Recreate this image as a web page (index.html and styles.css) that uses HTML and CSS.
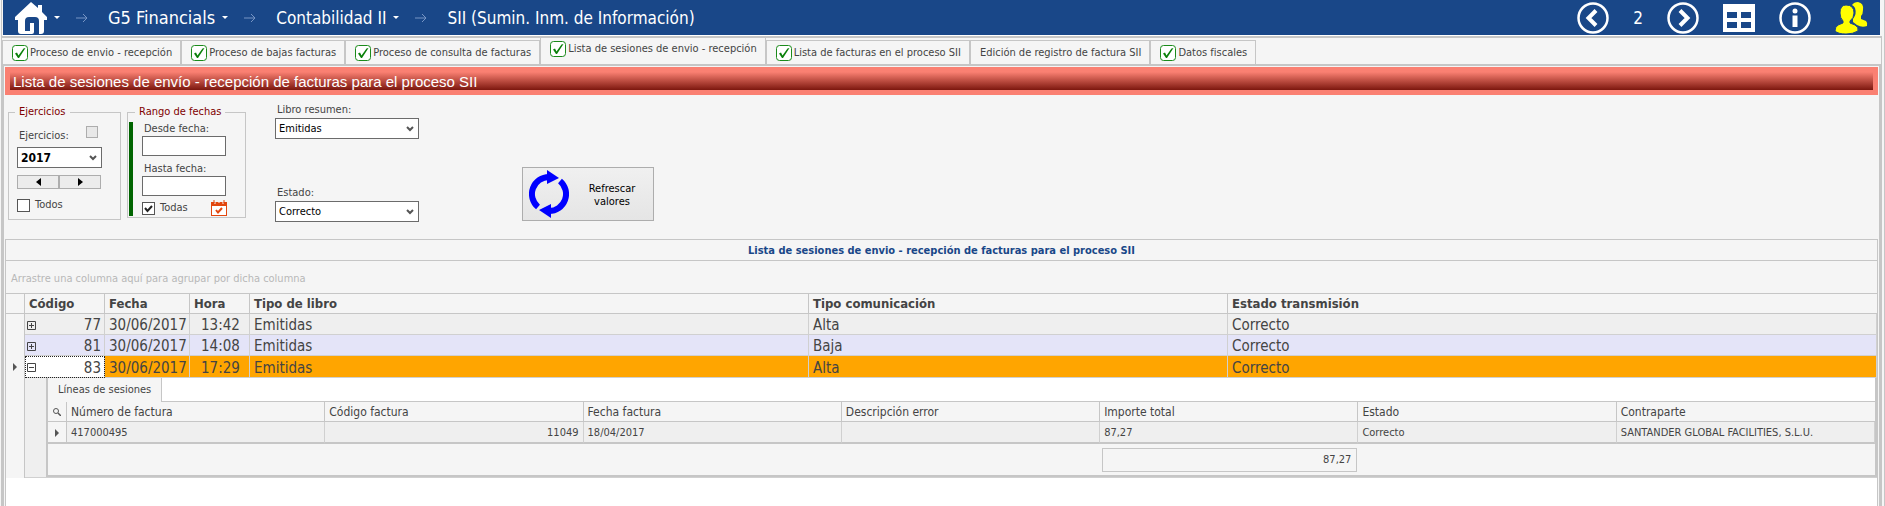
FILE: index.html
```html
<!DOCTYPE html>
<html lang="es">
<head>
  <meta charset="UTF-8">
  <meta name="viewport" content="width=device-width, initial-scale=1.0">
  <title>SII (Sumin. Inm. de Información)</title>
  <link rel="stylesheet" href="styles.css">
</head>
<body>
  <svg class="defs" width="0" height="0" aria-hidden="true">
    <symbol id="arrow" viewBox="0 0 12 10"><path d="M0 5H11M7 1L11 5L7 9" fill="none" stroke="#7795c4"/></symbol>
    <symbol id="check" viewBox="0 0 16 16"><rect x=".5" y=".5" width="15" height="15" rx="3" fill="#fff" stroke="#1a8a1a"/><path d="M3 8.5L5 7.5L6.5 10.5L11.5 3.5L13.5 3L7 13H6Z" fill="#0a800a"/></symbol>
    <symbol id="plus" viewBox="0 0 9 9"><path d="M.5 .5H8.5V8.5H.5ZM2 4.5H7M4.5 2V7" fill="none" stroke="#444"/></symbol>
    <symbol id="minus" viewBox="0 0 9 9"><path d="M.5 .5H8.5V8.5H.5ZM2 4.5H7" fill="none" stroke="#444"/></symbol>
    <symbol id="mark" viewBox="0 0 4 8"><path d="M0 0L4 4L0 8Z" fill="#555"/></symbol>
  </svg>

  <div class="window">
    <header class="topbar">
      <nav class="crumbs">
        <a class="home" href="#" aria-label="Inicio">
          <svg width="32" height="32" viewBox="0 0 32 32"><path d="M16 0L23 6V3H27V10L32 15V18H29V29Q29 32 26 32H24V19Q24 15 20 15H14Q10 15 10 19V29H15V21H19V30Q19 32 17 32H6Q3 32 3 29V18H0V15Z" fill="#fff"/></svg>
        </a>
        <span class="caret"></span>
        <svg class="arrow" width="12" height="10"><use href="#arrow"/></svg>
        <a class="app" href="#">G5 Financials</a>
        <span class="caret"></span>
        <svg class="arrow" width="12" height="10"><use href="#arrow"/></svg>
        <a href="#">Contabilidad II</a>
        <span class="caret"></span>
        <svg class="arrow" width="12" height="10"><use href="#arrow"/></svg>
        <a href="#">SII (Sumin. Inm. de Información)</a>
      </nav>
      <div class="tools">
        <button type="button" aria-label="Anterior"><svg width="32" height="32" viewBox="0 0 32 32" fill="none" stroke="#fff"><circle cx="16" cy="16" r="14.5" stroke-width="2.5"/><path d="M19 8.5L11.5 16L19 23.5" stroke-width="4"/></svg></button>
        <span class="page-number">2</span>
        <button type="button" aria-label="Siguiente"><svg width="32" height="32" viewBox="0 0 32 32" fill="none" stroke="#fff"><circle cx="16" cy="16" r="14.5" stroke-width="2.5"/><path d="M13 8.5L20.5 16L13 23.5" stroke-width="4"/></svg></button>
        <button type="button" aria-label="Ventanas"><svg width="32" height="28" viewBox="0 0 32 28"><path fill="#fff" fill-rule="evenodd" d="M0 0H32V28H0ZM4 8V14H14V8ZM18 8V14H28V8ZM4 18V24H14V18ZM18 18V24H28V18Z"/></svg></button>
        <button type="button" aria-label="Información"><svg width="32" height="32" viewBox="0 0 32 32"><circle cx="16" cy="16" r="14.5" fill="none" stroke="#fff" stroke-width="2.5"/><circle cx="16" cy="9" r="2.5" fill="#fff"/><path d="M13.5 13.5H18.5V25H13.5Z" fill="#fff"/></svg></button>
        <button type="button" aria-label="Usuarios"><svg width="33" height="32" viewBox="0 0 33 32" fill="#ff0"><path d="M17 3Q19 0 23 0Q29 1 28 8Q28 12 26 14V17L31 19Q33 21 32 24Q27 26 22 23L18 20V17Q22 12 20 6Q19 4 17 3Z"/><path d="M11 3Q19 3 19 11Q19 16 15 19V21L20 23Q24 25 23 29Q18 32 11 32Q3 32 0 29Q0 25 3 23L8 21V19Q5 16 5 11Q5 3 11 3Z" stroke="#194788"/></svg></button>
      </div>
    </header>

    <nav class="tabs">
      <a class="tab" href="#"><svg width="16" height="16"><use href="#check"/></svg>Proceso de envio - recepción</a>
      <a class="tab" href="#"><svg width="16" height="16"><use href="#check"/></svg>Proceso de bajas facturas</a>
      <a class="tab" href="#"><svg width="16" height="16"><use href="#check"/></svg>Proceso de consulta de facturas</a>
      <a class="tab active" href="#"><svg width="16" height="16"><use href="#check"/></svg>Lista de sesiones de envio - recepción</a>
      <a class="tab" href="#"><svg width="16" height="16"><use href="#check"/></svg>Lista de facturas en el proceso SII</a>
      <a class="tab" href="#">Edición de registro de factura SII</a>
      <a class="tab" href="#"><svg width="16" height="16"><use href="#check"/></svg>Datos fiscales</a>
    </nav>

    <main class="page">
      <h1 class="banner"><span>Lista de sesiones de envío - recepción de facturas para el proceso SII</span></h1>

      <form class="filters">
        <fieldset class="group years">
          <legend>Ejercicios</legend>
          <div class="line">
            <label for="ejercicio">Ejercicios:</label>
            <button class="mini" type="button" aria-label="Opciones"></button>
          </div>
          <select id="ejercicio" class="year"><option>2017</option></select>
          <div class="spin">
            <button type="button" aria-label="Anterior"><svg width="5" height="8" viewBox="0 0 5 8"><path d="M5 0V8L0 4Z"/></svg></button>
            <button type="button" aria-label="Siguiente"><svg width="5" height="8" viewBox="0 0 5 8"><path d="M0 0V8L5 4Z"/></svg></button>
          </div>
          <label class="tick"><input type="checkbox">Todos</label>
        </fieldset>

        <fieldset class="group dates">
          <legend>Rango de fechas</legend>
          <div class="stripe"></div>
          <div class="date-fields">
            <label for="desde">Desde fecha:</label>
            <input id="desde" class="date" type="text">
            <label class="second" for="hasta">Hasta fecha:</label>
            <input id="hasta" class="date" type="text">
            <div class="line">
              <label class="tick"><input type="checkbox" checked>Todas</label>
              <svg width="16" height="16" viewBox="0 0 16 16"><path d="M0 2H16V16H0Z" fill="#e2470f"/><path d="M1 6H15V15H1Z" fill="#fff"/><path d="M4 0V4M12 0V4M8 0V3" stroke="#f6f6f6"/><path d="M3 0V3M13 0V3" stroke="#e2470f"/><path d="M5 10L7 12.5L11 8" fill="none" stroke="#e2470f" stroke-width="2"/></svg>
            </div>
          </div>
        </fieldset>

        <div class="combos">
          <div class="combo">
            <label for="libro">Libro resumen:</label>
            <select id="libro"><option>Emitidas</option></select>
          </div>
          <div class="combo">
            <label for="estado">Estado:</label>
            <select id="estado"><option>Correcto</option></select>
          </div>
        </div>

        <button class="refresh" type="button">
          <svg width="40" height="48" viewBox="0 0 40 48"><g fill="none" stroke="#00f" stroke-width="6"><path d="M9 37A17 17 0 0 1 20 7"/><path d="M31 11A17 17 0 0 1 20 41"/></g><path d="M18 0L30 8L18 14ZM22 48L10 40L22 34Z" fill="#00f"/></svg>
          <span>Refrescar valores</span>
        </button>
      </form>

      <section class="grid">
        <h2>Lista de sesiones de envio - recepción de facturas para el proceso SII</h2>
        <p class="group-panel">Arrastre una columna aquí para agrupar por dicha columna</p>

        <table class="sessions">
          <colgroup>
            <col class="c-mark"><col class="c-code"><col class="c-date"><col class="c-time"><col class="c-book"><col class="c-com"><col>
          </colgroup>
          <thead>
            <tr><th></th><th>Código</th><th>Fecha</th><th>Hora</th><th>Tipo de libro</th><th>Tipo comunicación</th><th>Estado transmisión</th></tr>
          </thead>
          <tbody>
            <tr>
              <td class="mark"></td>
              <td class="code"><div><svg width="9" height="9"><use href="#plus"/></svg>77</div></td>
              <td>30/06/2017</td><td class="time">13:42</td><td>Emitidas</td><td>Alta</td><td>Correcto</td>
            </tr>
            <tr class="alt">
              <td class="mark"></td>
              <td class="code"><div><svg width="9" height="9"><use href="#plus"/></svg>81</div></td>
              <td>30/06/2017</td><td class="time">14:08</td><td>Emitidas</td><td>Baja</td><td>Correcto</td>
            </tr>
            <tr class="selected">
              <td class="mark"><svg width="4" height="8"><use href="#mark"/></svg></td>
              <td class="code"><div><svg width="9" height="9"><use href="#minus"/></svg>83</div></td>
              <td>30/06/2017</td><td class="time">17:29</td><td>Emitidas</td><td>Alta</td><td>Correcto</td>
            </tr>
            <tr>
              <td class="mark"></td>
              <td class="detail" colspan="6">
                <div class="detail-box">
                  <div class="detail-tabs"><a href="#">Líneas de sesiones</a></div>
                  <table class="lines">
                    <colgroup><col class="c-mark"><col><col><col><col><col><col><col></colgroup>
                    <thead>
                      <tr>
                        <th class="mark"><svg width="8" height="8" viewBox="0 0 8 8" fill="none" stroke="#555"><circle cx="3" cy="3" r="2.5"/><path d="M5 5L8 8" stroke-width="1.5"/></svg></th>
                        <th>Número de factura</th><th>Código factura</th><th>Fecha factura</th><th>Descripción error</th><th>Importe total</th><th>Estado</th><th>Contraparte</th>
                      </tr>
                    </thead>
                    <tbody>
                      <tr>
                        <td class="mark"><svg width="4" height="8"><use href="#mark"/></svg></td>
                        <td>417000495</td><td class="number">11049</td><td>18/04/2017</td><td></td><td>87,27</td><td>Correcto</td><td>SANTANDER GLOBAL FACILITIES, S.L.U.</td>
                      </tr>
                    </tbody>
                    <tfoot>
                      <tr><td colspan="5"></td><td class="total"><div>87,27</div></td><td colspan="2"></td></tr>
                    </tfoot>
                  </table>
                </div>
              </td>
            </tr>
          </tbody>
        </table>
      </section>
    </main>
  </div>
</body>
</html>
```
FILE: styles.css
```css
* {
  margin: 0;
  padding: 0;
  box-sizing: border-box;
}
body {
  background: #f5f5f5;
  color: #444;
  font-family: Tahoma, "DejaVu Sans Condensed", "Noto Sans", sans-serif;
  font-size: 11px;
  line-height: 14px;
}
a {
  color: inherit;
  text-decoration: none;
}
button, input, select {
  font: inherit;
}
svg {
  display: block;
  flex: none;
}
.defs {
  position: absolute;
}
.window {
  display: flex;
  flex-direction: column;
  min-height: 100vh;
  margin-left: 1px;
  border-left: 1px solid #c6c6c6;
  border-right: 1px solid #c6c6c6;
}

/* top bar */
.topbar {
  display: flex;
  justify-content: space-between;
  height: 36px;
  margin: 0 4px 0 1px;
  padding: 0 12px;
  background: #194788;
  border-bottom: 1px solid #fff;
  color: #fff;
  font-size: 17px;
  line-height: 20px;
}
.crumbs, .tools {
  display: flex;
  align-items: center;
}
.caret {
  margin-left: 7px;
  border: 3px solid transparent;
  border-top-color: #fff;
  border-bottom: 0;
}
.arrow {
  margin: 0 20px 0 16px;
}
.app {
  font-size: 18px;
}
.tools {
  gap: 24px;
}
.tools button {
  background: none;
  border: 0;
}

/* tabs */
.tabs {
  display: flex;
  align-items: flex-end;
  height: 30px;
  margin-right: 2px;
  border-top: 2px solid #c6c6c6;
  border-bottom: 2px solid #c6c6c6;
  border-right: 1px solid #c6c6c6;
}
.tab {
  display: flex;
  align-items: center;
  gap: 2px;
  height: 24px;
  padding: 0 8px 0 9px;
  border: 1px solid #c6c6c6;
  border-bottom: 0;
  white-space: nowrap;
}
.tab.active {
  height: 27px;
  padding-bottom: 3px;
  border-top: 0;
}

/* page */
.page {
  flex: 1;
  display: flex;
  flex-direction: column;
  margin-right: 2px;
  padding: 1px 1px 0;
  border-left: 2px solid #c6c6c6;
  border-right: 3px solid #c6c6c6;
}
.banner {
  padding: 5px;
  background: #fa8072;
  color: #fff;
  font: 15px/17px "Liberation Sans", Arial, sans-serif;
}
.banner span {
  display: block;
  padding: 1px 0 0 3px;
  background: linear-gradient(#fa8072, #7c170e);
}

/* filters */
.filters {
  display: flex;
  align-items: flex-start;
  height: 144px;
  padding: 8px 3px;
}
.group {
  margin-top: 2px;
  border: 1px solid #c6c6c6;
}
.group legend {
  margin-left: 7px;
  padding: 0 4px;
  color: #800000;
}
.years {
  width: 113px;
  height: 115px;
  margin-right: 6px;
  padding: 6px 8px;
}
.years legend {
  margin-left: -2px;
}
.line {
  display: flex;
  align-items: center;
  justify-content: space-between;
}
.years .line {
  height: 22px;
  padding: 0 14px 0 2px;
}
.mini {
  width: 12px;
  height: 12px;
  margin-bottom: 8px;
  background: #e8e8e8;
  border: 1px solid #adadad;
}
select {
  appearance: none;
  display: block;
  width: 144px;
  height: 21px;
  padding: 0 3px;
  border: 1px solid #6b6b6b;
  border-radius: 0;
  color: #000;
  background: #fff url("data:image/svg+xml,%3Csvg xmlns='http://www.w3.org/2000/svg' width='8' height='6'%3E%3Cpath d='M1 1L4 4L7 1' fill='none' stroke='%23555' stroke-width='2'/%3E%3C/svg%3E") no-repeat right 4px center;
}
.year {
  width: 85px;
  font-size: 12px;
  font-weight: bold;
}
.spin {
  display: flex;
  margin: 7px 0 9px;
}
.spin button {
  display: flex;
  align-items: center;
  justify-content: center;
  width: 42px;
  height: 14px;
  background: #ececec;
  border: 1px solid #adadad;
}
.tick {
  display: flex;
  align-items: center;
  gap: 5px;
}
.tick input {
  appearance: none;
  width: 13px;
  height: 13px;
  background: #fff;
  border: 1px solid #555;
}
.tick input:checked {
  background: #fff url("data:image/svg+xml,%3Csvg xmlns='http://www.w3.org/2000/svg' width='11' height='11'%3E%3Cpath d='M2 5L4.500 8L9 3' fill='none' stroke='%23222' stroke-width='2'/%3E%3C/svg%3E") center;
}
.dates {
  position: relative;
  width: 119px;
  height: 113px;
}
.dates .stripe {
  position: absolute;
  top: 3px;
  bottom: 1px;
  left: 1px;
  width: 4px;
  background: #006400;
}
.date-fields {
  padding: 3px 18px 0 14px;
}
.date-fields > label {
  display: block;
  padding-left: 2px;
}
.date {
  display: block;
  width: 84px;
  height: 20px;
  border: 1px solid #6b6b6b;
  background: #fff;
}
.date-fields .second {
  margin-top: 6px;
}
.date-fields .line {
  height: 24px;
}
.combos {
  display: flex;
  flex-direction: column;
  gap: 47px;
  margin-left: 29px;
}
.combo label {
  display: block;
  height: 15px;
  padding-left: 2px;
}
.refresh {
  display: flex;
  align-items: center;
  width: 132px;
  height: 54px;
  margin: 64px 0 0 103px;
  padding-left: 6px;
  background: linear-gradient(#f0f0f0, #e5e5e5);
  border: 1px solid #adadad;
  color: #000;
  line-height: 13px;
}
.refresh span {
  flex: 1;
  padding: 2px 12px 0 14px;
}

/* sessions grid */
.grid {
  flex: 1;
  background: #fff;
  border: 1px solid #c6c6c6;
  border-bottom: 0;
}
.grid h2 {
  height: 21px;
  background: #f5f5f5;
  border-bottom: 1px solid #c6c6c6;
  color: #194788;
  font-size: 11px;
  line-height: 21px;
  text-align: center;
}
.group-panel {
  height: 33px;
  padding-left: 5px;
  background: #f5f5f5;
  border-bottom: 1px solid #c6c6c6;
  color: #b8b8b8;
  line-height: 35px;
}
table {
  width: 100%;
  table-layout: fixed;
  border-spacing: 0;
}
th {
  height: 20px;
  padding: 1px 4px 0;
  background: #f5f5f5;
  border-right: 1px solid #c6c6c6;
  border-bottom: 1px solid #c6c6c6;
  font-size: 13px;
  text-align: left;
}
th:last-child, td:last-child {
  border-right: 0;
}
.c-mark { width: 19px; }
.c-code { width: 80px; }
.c-date { width: 85px; }
.c-time { width: 60px; }
.c-book { width: 559px; }
.c-com { width: 419px; }
.sessions td {
  height: 21px;
  padding: 2px 4px 0;
  background: #efefef;
  border-right: 1px solid #d0d0d0;
  border-bottom: 1px solid #d0d0d0;
  font-size: 15px;
}
.sessions .alt td {
  background: #e4e4f8;
}
.sessions .selected td {
  height: 22px;
  background: #ffa500;
}
.sessions .selected .code {
  background: #fff;
  outline: 1px dotted #222;
  outline-offset: -1px;
}
.sessions .mark, .sessions tr td.mark {
  padding: 0;
  background: #f5f5f5;
  border-right: 1px solid #c6c6c6;
}
.sessions td.mark {
  border-bottom: 0;
}
.mark svg {
  margin: 0 auto;
}
.sessions .code {
  padding: 2px 3px 0 2px;
}
.code div {
  display: flex;
  align-items: center;
  justify-content: space-between;
}
.sessions .time {
  padding: 2px 11px 0;
  text-align: right;
}

/* invoice lines of the open session */
.sessions .detail {
  padding: 0 0 0 21px;
  border-right: 0;
}
.detail-box {
  border: 2px solid #c6c6c6;
  border-top: 0;
  background: #fff;
}
.detail-tabs {
  display: flex;
  border-bottom: 1px solid #c6c6c6;
}
.detail-tabs a {
  height: 24px;
  margin-bottom: -1px;
  padding: 0 10px;
  background: #f5f5f5;
  border-right: 1px solid #c6c6c6;
  font-size: 11px;
  line-height: 24px;
}
.lines th {
  font-size: 12px;
  font-weight: normal;
}
.lines td {
  font-size: 11px;
}
.lines .number {
  text-align: right;
}
.lines tbody td, .lines tbody td.mark {
  height: 22px;
  padding-top: 1px;
  border-bottom: 2px solid #c6c6c6;
}
.lines tfoot td {
  height: 31px;
  padding: 0;
  background: #f5f5f5;
  border: 0;
}
.lines .total div {
  height: 24px;
  margin: 0 1px 0 2px;
  padding-right: 5px;
  border: 1px solid #c6c6c6;
  line-height: 22px;
  text-align: right;
}
```
